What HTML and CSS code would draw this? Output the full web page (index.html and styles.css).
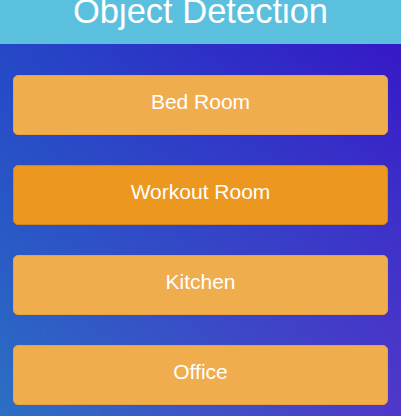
FILE: index.html
```html
<!DOCTYPE html>
<html>
<head>
<meta charset="utf-8">
<link rel="stylesheet" href="styles.css">
</head>
<body>
<div class="page">
  <header class="header"><h1 class="title">Object Detection</h1></header>
  <main class="rooms">
    <button class="room">Bed Room</button>
    <button class="room room-active">Workout Room</button>
    <button class="room">Kitchen</button>
    <button class="room">Office</button>
  </main>
</div>
</body>
</html>
```
FILE: styles.css
```css
html, body {
  margin: 0;
  padding: 0;
  height: 100%;
}
body {
  font-family: "Liberation Sans", Arial, sans-serif;
  overflow: hidden;
}
.page {
  position: relative;
  min-height: 416px;
  background: linear-gradient(to bottom, #2444c8 0%, #2a5cc6 60%, #2c70c4 100%);
}
.page::before {
  content: "";
  position: absolute;
  inset: 0;
  background: linear-gradient(to bottom, #3412c6 0%, #3c30c8 50%, #5038c8 100%);
  -webkit-mask-image: linear-gradient(to right, transparent 0%, rgba(0,0,0,0.5) 50%, black 100%);
  mask-image: linear-gradient(to right, transparent 0%, rgba(0,0,0,0.5) 50%, black 100%);
}
.header {
  position: relative;
  height: 44px;
  background: #5bc0de;
  overflow: hidden;
  display: flex;
  justify-content: center;
}
.title {
  margin: 0;
  margin-top: -11px;
  color: #fff;
  font-weight: normal;
  font-size: 34.5px;
  line-height: 44px;
}
.rooms {
  position: relative;
  display: flex;
  flex-direction: column;
  gap: 30px;
  padding: 31px 13px 0 13px;
}
.room {
  height: 60px;
  border: 1px solid #eea236;
  border-radius: 5px;
  background: #f0ad4e;
  color: #fff;
  font-family: "Liberation Sans", Arial, sans-serif;
  font-size: 21px;
  padding: 0 0 6px 0;
}
.room-active {
  background: #ec971f;
  border-color: #d58512;
}
```
